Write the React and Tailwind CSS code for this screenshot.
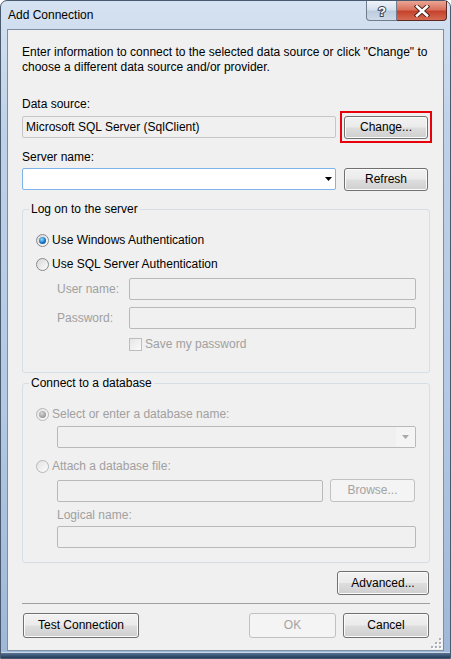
import React from "react";

// Win7 style push button
const Button = ({ children, className = "", disabled = false }) => (
  <button
    disabled={disabled}
    className={
      disabled
        ? `h-[23px] rounded-[3px] border border-[#bfc1c3] bg-[#f4f4f4] text-[#a3a3a3] ${className}`
        : `h-[23px] rounded-[3px] border border-[#707070] bg-[linear-gradient(#f2f2f2_0%,#ebebeb_48%,#dddddd_52%,#cfcfcf_100%)] text-black shadow-[inset_0_0_0_1px_#fbfbfb] ${className}`
    }
  >
    {children}
  </button>
);

const Radio = ({ checked = false, disabled = false }) => (
  <span
    className={
      disabled
        ? "flex h-[13px] w-[13px] shrink-0 items-center justify-center rounded-full border border-[#b7b7b7] bg-[linear-gradient(135deg,#e4e4e4,#fbfbfb)]"
        : "flex h-[13px] w-[13px] shrink-0 items-center justify-center rounded-full border border-[#8a8a8a] bg-[linear-gradient(135deg,#d8d8d8,#fcfcfc)]"
    }
  >
    {checked &&
      (disabled ? (
        <span className="h-[7px] w-[7px] rounded-full bg-[radial-gradient(circle_at_40%_35%,#d6d6d6,#9a9a9a_70%,#8a8a8a)]" />
      ) : (
        <span className="h-[7px] w-[7px] rounded-full bg-[radial-gradient(circle_at_40%_35%,#8fe4ff,#1a6fc2_55%,#0b3f79)]" />
      ))}
  </span>
);

const Field = ({ className = "" }) => (
  <div className={`h-[22px] rounded-[2px] border border-[#b9b9b9] bg-[#f0f0f0] ${className}`} />
);

const Arrow = ({ color }) => (
  <svg width="7" height="4" viewBox="0 0 7 4">
    <path d="M0 0h7L3.5 4z" fill={color} />
  </svg>
);

const Grip = () => (
  <svg width="11" height="11" viewBox="0 0 11 11">
    {[
      [8, 0],
      [8, 4],
      [4, 4],
      [8, 8],
      [4, 8],
      [0, 8],
    ].map(([x, y], i) => (
      <g key={i}>
        <rect x={x + 1} y={y + 1} width="2" height="2" fill="#ffffff" />
        <rect x={x} y={y} width="2" height="2" fill="#a8b0ba" />
      </g>
    ))}
  </svg>
);

const App = () => {
  return (
    <div className="h-[659px] w-[451px] overflow-hidden bg-white font-['Segoe_UI','Liberation_Sans',sans-serif] text-[12px] leading-[15px] text-black">
      <div className="flex h-full w-full flex-col rounded-t-[7px] border border-[#4a5a6e] bg-[linear-gradient(180deg,#d5e2f1_0%,#bed1e8_20%,#b3c9e4_60%,#9fb8d8_100%)]">
        {/* title bar */}
        <div className="flex h-[28px] shrink-0 items-start">
          <div className="pl-[7px] pt-[7px] text-[12px] leading-[15px] text-black">Add Connection</div>
          <div className="ml-auto mr-[3px] flex">
            <div className="flex h-[20px] w-[31px] items-center justify-center rounded-bl-[4px] border border-t-0 border-[#6f7d8f] bg-[linear-gradient(#eef3f9_0%,#d6e1ee_45%,#bccbdd_55%,#cfdae8_100%)]">
              <svg width="12" height="14" viewBox="0 0 12 14">
                <text
                  x="6"
                  y="12"
                  textAnchor="middle"
                  fontFamily="Liberation Sans, sans-serif"
                  fontWeight="bold"
                  fontSize="13"
                  fill="#ffffff"
                  stroke="#34465c"
                  strokeWidth="2"
                  paintOrder="stroke"
                >
                  ?
                </text>
              </svg>
            </div>
            <div className="flex h-[20px] w-[50px] items-center justify-center rounded-br-[4px] border border-l-0 border-t-0 border-[#5a2b24] bg-[linear-gradient(#eaa595_0%,#d9725e_45%,#c5432d_55%,#d66a52_100%)]">
              <svg width="16" height="12" viewBox="0 0 16 12">
                <path d="M3 1.5L13 10.5M13 1.5L3 10.5" stroke="#4a2018" strokeWidth="4.4" strokeLinecap="square" />
                <path d="M3 1.5L13 10.5M13 1.5L3 10.5" stroke="#ffffff" strokeWidth="2.6" strokeLinecap="square" />
              </svg>
            </div>
          </div>
        </div>

        {/* client area */}
        <div className="mx-[6px] flex h-[622px] shrink-0 flex-col border border-[#7d8ea3] bg-[#f0f0f0] pl-[14px] pr-[12px]">
          <p className="pt-[15px]">
            Enter information to connect to the selected data source or click "Change" to
            <br />
            choose a different data source and/or provider.
          </p>

          <div className="mt-[22px]">Data source:</div>
          <div className="mt-[4px] flex items-start gap-[8px]">
            <div className="flex h-[22px] w-[314px] items-center rounded-[2px] border border-[#c6c6c6] bg-[#f0f0f0] pl-[3px]">
              Microsoft SQL Server (SqlClient)
            </div>
            <div className="relative">
              <Button className="w-[84px]">Change...</Button>
              <div className="absolute -left-[4px] -top-[5px] h-[32px] w-[92px] border-2 border-[#e8000b]" />
            </div>
          </div>

          <div className="mt-[11px]">Server name:</div>
          <div className="mt-[3px] flex items-start gap-[8px]">
            <div className="flex h-[22px] w-[314px] items-center justify-end rounded-[2px] border border-[#7eb4ea] bg-white pr-[3px]">
              <Arrow color="#000000" />
            </div>
            <Button className="w-[84px]">Refresh</Button>
          </div>

          {/* log on group */}
          <fieldset className="mt-[10px] w-[408px] rounded-[3px] border border-[#d5dfe5]">
            <legend className="ml-[6px] px-[2px] leading-[16px]">Log on to the server</legend>
            <div className="flex flex-col pl-[13px] pr-[13px] pb-[20px] pt-[15px]">
              <label className="flex h-[16px] items-center gap-[3px]">
                <Radio checked />
                <span>Use Windows Authentication</span>
              </label>
              <label className="mt-[8px] flex h-[16px] items-center gap-[3px]">
                <Radio />
                <span>Use SQL Server Authentication</span>
              </label>
              <div className="mt-[6px] flex items-center text-[#a0a0a0]">
                <span className="w-[93px] pl-[21px]">User name:</span>
                <Field className="flex-1" />
              </div>
              <div className="mt-[7px] flex items-center text-[#a0a0a0]">
                <span className="w-[93px] pl-[21px]">Password:</span>
                <Field className="flex-1" />
              </div>
              <label className="mt-[7px] flex h-[16px] items-center gap-[3px] pl-[93px] text-[#a0a0a0]">
                <span className="h-[13px] w-[13px] border border-[#bdbdbd] bg-[linear-gradient(135deg,#e6e6e6,#fafafa)]" />
                <span>Save my password</span>
              </label>
            </div>
          </fieldset>

          {/* database group */}
          <fieldset className="mt-[2px] w-[408px] rounded-[3px] border border-[#d5dfe5]">
            <legend className="ml-[6px] px-[2px] leading-[16px]">Connect to a database</legend>
            <div className="flex flex-col pl-[13px] pr-[13px] pb-[14px] pt-[15px] text-[#a0a0a0]">
              <label className="flex h-[16px] items-center gap-[3px]">
                <Radio checked disabled />
                <span>Select or enter a database name:</span>
              </label>
              <div className="ml-[21px] mt-[4px] flex h-[22px] items-center justify-end rounded-[2px] border border-[#b9b9b9] bg-[#f0f0f0]">
                <div className="flex h-full w-[19px] items-center justify-center bg-[#f4f4f4]">
                  <Arrow color="#a8a8a8" />
                </div>
              </div>
              <label className="mt-[10px] flex h-[16px] items-center gap-[3px]">
                <Radio disabled />
                <span>Attach a database file:</span>
              </label>
              <div className="ml-[21px] mt-[5px] flex items-center gap-[7px]">
                <Field className="w-[266px]" />
                <Button disabled className="w-[85px]">
                  Browse...
                </Button>
              </div>
              <div className="ml-[21px] mt-[6px]">Logical name:</div>
              <Field className="ml-[21px] mt-[3px]" />
            </div>
          </fieldset>

          <div className="mt-[8px] flex justify-end pr-[2px]">
            <Button className="h-[24px] w-[92px]">Advanced...</Button>
          </div>

          <div className="mt-[8px] w-[408px] border-t border-[#a0a0a0]" />

          <div className="mt-[9px] flex items-start">
            <Button className="ml-[1px] h-[25px] w-[116px]">Test Connection</Button>
            <Button disabled className="ml-auto h-[25px] w-[87px]">
              OK
            </Button>
            <Button className="ml-[7px] mr-[2px] h-[25px] w-[86px]">Cancel</Button>
          </div>

          <div className="mt-auto -mr-[11px] mb-[1px] flex justify-end">
            <Grip />
          </div>
        </div>

        {/* bottom frame */}
        <div className="mt-[1px] flex-1 border-t border-[#c9d6e6] bg-[linear-gradient(#5b7494,#22395a)]" />
      </div>
    </div>
  );
};

export default App;
